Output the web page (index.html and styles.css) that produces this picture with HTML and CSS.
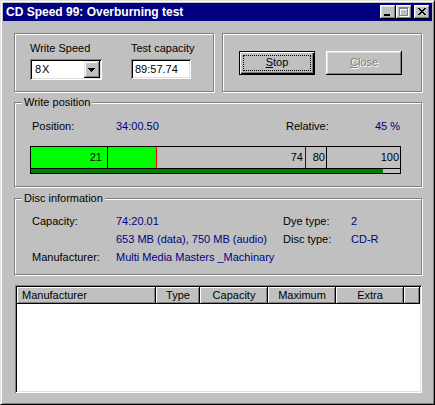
FILE: index.html
```html
<!DOCTYPE html>
<html>
<head>
<meta charset="utf-8">
<link rel="stylesheet" href="styles.css">
</head>
<body>
<div class="window">
  <div class="titlebar">
    <span class="title">CD Speed 99: Overburning test</span>
    <div class="tbuttons">
      <div class="tb"><svg width="12" height="10" viewBox="2 2 12 10" shape-rendering="crispEdges"><rect x="4" y="9" width="6" height="2" fill="#000"/></svg></div>
      <div class="tb"><svg width="12" height="10" viewBox="2 2 12 10" shape-rendering="crispEdges"><path fill="#fff" d="M4 3h9v2H4z M4 5h1v7H4z M12 5h1v7h-1z M4 11h9v1H4z"/><path fill="#808080" d="M3 2h9v2H3z M3 4h1v7H3z M11 4h1v7h-1z M3 10h9v1H3z"/></svg></div>
      <div class="tb close"><svg width="12" height="10" viewBox="2 2 12 10" shape-rendering="crispEdges"><path fill="#000" d="M4 3h2v1H4z M10 3h2v1h-2z M5 4h2v1H5z M9 4h2v1H9z M6 5h4v1H6z M7 6h2v1H7z M6 7h4v1H6z M5 8h2v1H5z M9 8h2v1H9z M4 9h2v1H4z M10 9h2v1h-2z"/></svg></div>
    </div>
  </div>
  <div class="client">
    <div class="toprow">
      <div class="etch speedbox">
        <div class="field f1">
          <div class="lbl">Write Speed</div>
          <div class="combo">
            <span class="combo-text">8X</span>
            <span class="combo-btn"><svg width="12" height="13" viewBox="2 2 12 13" shape-rendering="crispEdges"><path fill="#000" d="M4 7h7v1H4z M5 8h5v1H5z M6 9h3v1H6z M7 10h1v1H7z"/></svg></span>
          </div>
        </div>
        <div class="field f2">
          <div class="lbl">Test capacity</div>
          <div class="edit">89:57.74</div>
        </div>
      </div>
      <div class="etch btnbox">
        <div class="btn default"><span class="focus"><u>S</u>top</span></div>
        <div class="btn disabled"><span class="cap"><u>C</u>lose</span></div>
      </div>
    </div>

    <div class="etch group wp">
      <span class="legend">Write position</span>
      <div class="posrow">
        <span>Position:</span>
        <span class="val">34:00.50</span>
        <span>Relative:</span>
        <span class="val">45 %</span>
      </div>
      <div class="bar">
        <div class="bar-top">
          <div class="cell c1">21</div>
          <div class="cell c2"></div>
          <div class="mark red"></div>
          <div class="cell c3">74</div>
          <div class="mark blue"></div>
          <div class="cell c4">80</div>
          <div class="cell c5">100</div>
        </div>
        <div class="bar-bottom"><div class="fill" style="width:352px"></div></div>
      </div>
    </div>

    <div class="etch group disc">
      <span class="legend">Disc information</span>
      <div class="discgrid">
        <span>Capacity:</span>
        <span class="val">74:20.01</span>
        <span>Dye type:</span>
        <span class="val">2</span>
        <span></span>
        <span class="val">653 MB (data), 750 MB (audio)</span>
        <span>Disc type:</span>
        <span class="val">CD-R</span>
        <span>Manufacturer:</span>
        <span class="val span3">Multi Media Masters _Machinary</span>
      </div>
    </div>

    <div class="list">
      <div class="lhead">
        <div class="hc h-man">Manufacturer</div>
        <div class="hc h-type">Type</div>
        <div class="hc h-cap">Capacity</div>
        <div class="hc h-max">Maximum</div>
        <div class="hc h-extra">Extra</div>
        <div class="hc h-fill"></div>
      </div>
    </div>
  </div>
</div>
</body>
</html>
```

FILE: styles.css
```css
* { box-sizing: border-box; }

body {
  margin: 0;
  background: #c0c0c0;
  font-family: "Liberation Sans", Arial, sans-serif;
  font-size: 11px;
  line-height: 13px;
  color: #000;
}

.window {
  width: 435px;
  height: 405px;
  border: 1px solid;
  border-color: #dfdfdf #000 #000 #dfdfdf;
  box-shadow: inset 1px 1px #fff, inset -1px -1px #808080;
  padding: 2px;
  display: flex;
  flex-direction: column;
  background: #c0c0c0;
}

.titlebar {
  flex: none;
  height: 18px;
  background: #000080;
  color: #fff;
  display: flex;
  align-items: center;
  justify-content: space-between;
  padding: 0 2px 0 3px;
}

.title {
  font-weight: bold;
  font-size: 12px;
  line-height: 18px;
  white-space: nowrap;
}

.tbuttons {
  display: flex;
}

.tb {
  width: 16px;
  height: 14px;
  background: #c0c0c0;
  box-shadow: inset -1px -1px #000, inset 1px 1px #fff, inset -2px -2px #808080, inset 2px 2px #dfdfdf;
  padding: 2px;
}

.tb svg { display: block; }

.tb.close { margin-left: 2px; }

.client {
  flex: 1;
  padding: 12px 10px 0 11px;
  display: flex;
  flex-direction: column;
}

.etch {
  border: 1px solid #808080;
  box-shadow: inset 1px 1px #fff, 1px 1px #fff;
}

.toprow {
  display: grid;
  grid-template-columns: 200px 200px;
  gap: 8px;
  height: 59px;
}

.speedbox {
  display: flex;
  gap: 29px;
  padding: 8px 0 0 15px;
}

.lbl {
  margin-bottom: 4px;
  white-space: nowrap;
}

.f1 { width: 72px; }

.combo {
  width: 72px;
  height: 21px;
  background: #fff;
  box-shadow: inset 1px 1px #808080, inset -1px -1px #fff, inset 2px 2px #000, inset -2px -2px #dfdfdf;
  padding: 2px;
  display: flex;
}

.combo-text {
  flex: 1;
  padding-left: 3px;
  line-height: 17px;
  letter-spacing: 1px;
}

.combo-btn {
  width: 16px;
  height: 17px;
  background: #c0c0c0;
  box-shadow: inset -1px -1px #000, inset 1px 1px #dfdfdf, inset -2px -2px #808080, inset 2px 2px #fff;
  padding: 2px;
}

.combo-btn svg { display: block; }

.edit {
  width: 60px;
  height: 20px;
  background: #fff;
  box-shadow: inset 1px 1px #808080, inset -1px -1px #fff, inset 2px 2px #000, inset -2px -2px #dfdfdf;
  padding: 2px 2px 2px 4px;
  line-height: 16px;
}

.btnbox {
  display: flex;
  align-items: center;
  gap: 11px;
  padding-left: 16px;
}

.btn {
  width: 76px;
  height: 24px;
  background: #c0c0c0;
  display: flex;
  align-items: stretch;
}

.btn.default {
  border: 1px solid #000;
  box-shadow: inset 1px 1px #fff, inset -1px -1px #000, inset -2px -2px #808080;
  padding: 3px;
}

.btn.default .focus {
  flex: 1;
  border: 1px dotted #000;
  display: flex;
  align-items: center;
  justify-content: center;
}

.btn.disabled {
  box-shadow: inset -1px -1px #000, inset 1px 1px #fff, inset -2px -2px #808080, inset 2px 2px #dfdfdf;
  align-items: center;
  justify-content: center;
  color: #808080;
  text-shadow: 1px 1px #fff;
}

.group {
  position: relative;
  margin-right: 0;
}

.legend {
  position: absolute;
  top: -7px;
  left: 7px;
  padding: 0 2px;
  background: #c0c0c0;
  white-space: nowrap;
}

.val { color: #000080; white-space: nowrap; }

.wp {
  margin-top: 10px;
  height: 85px;
  padding: 17px 20px 0 15px;
}

.posrow {
  display: grid;
  grid-template-columns: 84px 170px 89px auto;
  padding-left: 2px;
}

.bar {
  margin-top: 13px;
  width: 371px;
  border: 1px solid #000;
}

.bar-top {
  display: flex;
  height: 22px;
  border-bottom: 1px solid #000;
  line-height: 21px;
}

.cell {
  text-align: right;
  white-space: nowrap;
}

.c1 {
  width: 77px;
  background: #00ff00;
  border-right: 1px solid #000;
  padding-right: 5px;
}

.c2 {
  width: 48px;
  background: #00ff00;
}

.mark { width: 1px; }
.red { background: #ff0000; }
.blue { background: #0000ff; }

.c3 {
  width: 148px;
  padding-right: 2px;
}

.c4 {
  width: 21px;
  border-right: 1px solid #000;
  padding-right: 1px;
}

.c5 {
  flex: 1;
  padding-right: 1px;
}

.bar-bottom {
  height: 4px;
  background: #c0c0c0;
}

.fill {
  height: 4px;
  background: #008000;
}

.disc {
  margin-top: 11px;
  height: 77px;
  padding: 13px 0 0 15px;
}

.discgrid {
  display: grid;
  grid-template-columns: 84px 167px 68px auto;
  line-height: 18px;
  padding-left: 2px;
}

.span3 { grid-column: 2 / span 3; }

.list {
  margin-top: 10px;
  margin-left: 1px;
  height: 108px;
  background: #fff;
  box-shadow: inset 1px 1px #808080, inset -1px -1px #fff, inset 2px 2px #000, inset -2px -2px #dfdfdf;
  padding: 2px;
}

.lhead {
  display: flex;
  height: 17px;
}

.hc {
  background: #c0c0c0;
  box-shadow: inset -1px -1px #000, inset 1px 1px #fff, inset -2px -2px #808080;
  line-height: 15px;
  padding-top: 1px;
  text-align: center;
  white-space: nowrap;
}

.h-man { width: 139px; text-align: left; padding-left: 5px; }
.h-type { width: 44px; }
.h-cap { width: 68px; }
.h-max { width: 68px; }
.h-extra { width: 68px; }
.h-fill { flex: 1; }
```
